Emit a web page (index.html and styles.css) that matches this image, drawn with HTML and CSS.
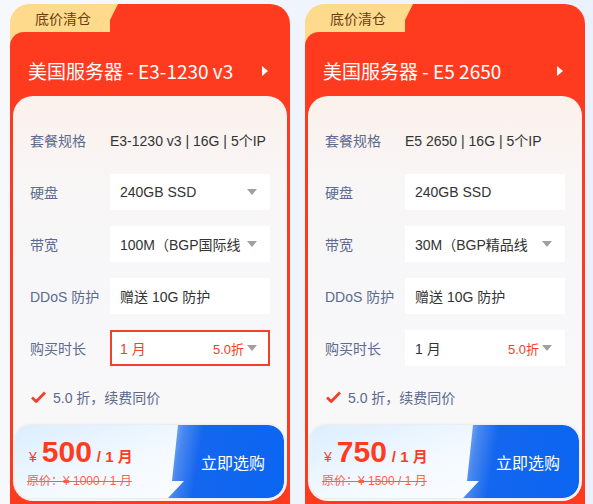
FILE: index.html
```html
<!DOCTYPE html>
<html lang="zh-CN">
<head>
<meta charset="UTF-8" />
<meta name="viewport" content="width=device-width, initial-scale=1" />
<title>美国服务器</title>
<link rel="stylesheet" href="styles.css">
</head>
<body>

  <div class="cards">

    <!-- Card 1 -->
    <div class="card">
      <div class="tag">底价清仓</div>
      <div class="head">
        <span class="title">美国服务器 - E3-1230 v3</span>
        <span class="arrow"></span>
      </div>
      <div class="panel">
        <div class="row">
          <span class="label">套餐规格</span>
          <span class="plain">E3-1230 v3 | 16G | 5个IP</span>
        </div>
        <div class="row">
          <span class="label">硬盘</span>
          <div class="box"><span class="val">240GB SSD</span><i class="caret"></i></div>
        </div>
        <div class="row">
          <span class="label">带宽</span>
          <div class="box"><span class="val">100M（BGP国际线</span><i class="caret"></i></div>
        </div>
        <div class="row">
          <span class="label">DDoS 防护</span>
          <div class="box"><span class="val">赠送 10G 防护</span></div>
        </div>
        <div class="row">
          <span class="label">购买时长</span>
          <div class="box active"><span class="val">1 月</span><span class="off">5.0折</span><i class="caret"></i></div>
        </div>
        <div class="note">
          <svg class="check" width="15" height="12" viewBox="0 0 15 12"><path d="M1 6.5 L5.2 10.5 L14 1.5" fill="none" stroke="#f2402a" stroke-width="2.8" stroke-linejoin="round"/></svg>
          <span>5.0 折，续费同价</span>
        </div>
        <div class="buybar">
          <div class="price">
            <div class="now"><span class="yen">¥</span><span class="num">500</span><span class="unit">/ 1 月</span></div>
            <div class="old">原价：¥ 1000 / 1 月</div>
          </div>
          <div class="buy">立即选购</div>
        </div>
      </div>
    </div>

    <!-- Card 2 -->
    <div class="card">
      <div class="tag">底价清仓</div>
      <div class="head">
        <span class="title">美国服务器 - E5 2650</span>
        <span class="arrow"></span>
      </div>
      <div class="panel">
        <div class="row">
          <span class="label">套餐规格</span>
          <span class="plain">E5 2650 | 16G | 5个IP</span>
        </div>
        <div class="row">
          <span class="label">硬盘</span>
          <div class="box"><span class="val">240GB SSD</span></div>
        </div>
        <div class="row">
          <span class="label">带宽</span>
          <div class="box"><span class="val">30M（BGP精品线</span><i class="caret"></i></div>
        </div>
        <div class="row">
          <span class="label">DDoS 防护</span>
          <div class="box"><span class="val">赠送 10G 防护</span></div>
        </div>
        <div class="row">
          <span class="label">购买时长</span>
          <div class="box"><span class="val">1 月</span><span class="off">5.0折</span><i class="caret"></i></div>
        </div>
        <div class="note">
          <svg class="check" width="15" height="12" viewBox="0 0 15 12"><path d="M1 6.5 L5.2 10.5 L14 1.5" fill="none" stroke="#f2402a" stroke-width="2.8" stroke-linejoin="round"/></svg>
          <span>5.0 折，续费同价</span>
        </div>
        <div class="buybar">
          <div class="price">
            <div class="now"><span class="yen">¥</span><span class="num">750</span><span class="unit">/ 1 月</span></div>
            <div class="old">原价：¥ 1500 / 1 月</div>
          </div>
          <div class="buy">立即选购</div>
        </div>
      </div>
    </div>

  </div>

</body>
</html>
```

FILE: styles.css
```css
* {
  margin: 0; padding: 0; box-sizing: border-box;
}
body {
  height: 504px;
  overflow: hidden;
  background: linear-gradient(to right, #f6f8fc, #eaf1fd);
  font-family: "Liberation Sans", "Noto Sans CJK SC", sans-serif;
  color: #333;
}
.cards {
  display: flex;
  gap: 15px;
  padding: 4px 0 0 10px;
}

/* Card shell */
.card {
  width: 280px;
  height: 560px;
  border-radius: 20px;
  overflow: hidden;
  background:
    linear-gradient(to right, #fedb8c 0 100px, transparent 100px) 0 0 / 100% 50px no-repeat,
    #fe3b1f;
  padding: 0 3px;
}
.tag {
  width: 118px;
  height: 28px;
  margin-left: -3px;
  background: #fedb8c;
  clip-path: polygon(0 0, 108px 0, 96px 24px, 90px 28px, 0 28px);
  color: #6b3b12;
  font-family: "Noto Sans CJK SC", sans-serif;
  font-size: 14px;
  line-height: 28px;
  padding-left: 25px;
}
.head {
  margin: 0 -3px;
  height: 64px;
  background: #fe3b1f;
  border-top-left-radius: 14px;
  display: flex;
  align-items: center;
  justify-content: space-between;
  padding: 14px 22px 0 18px;
}
.title {
  color: #fff;
  font-family: "Noto Sans CJK SC", sans-serif;
  font-size: 19px;
  line-height: 24px;
}
.arrow {
  width: 0; height: 0;
  border-top: 5px solid transparent;
  border-bottom: 5px solid transparent;
  border-left: 6px solid #fff;
}

/* Inner panel */
.panel {
  border-radius: 20px;
  background: linear-gradient(180deg, #fbf1ec 0, #f8f6f6 22%, #f7f7f9 50%, #f9f8f9 80%, #fdf6f3 100%);
  padding: 26px 17px 3px 17px;
  display: flex;
  flex-direction: column;
}
.row {
  display: flex;
  align-items: center;
  height: 36px;
  margin-bottom: 16px;
}
.row:nth-child(5) {
  margin-bottom: 0;
}
.label {
  width: 80px;
  font-size: 14px;
  color: #5c6b8e;
  white-space: nowrap;
}
.plain {
  font-size: 14px;
  color: #333;
  white-space: nowrap;
}
.box {
  width: 160px;
  height: 36px;
  background: #fff;
  display: flex;
  align-items: center;
  padding: 0 13px 0 10px;
  font-size: 14px;
  color: #333;
}
.box .val {
  flex: 1;
  white-space: nowrap;
  overflow: hidden;
}
.box .caret {
  width: 0; height: 0;
  margin-left: 3px;
  border-left: 5px solid transparent;
  border-right: 5px solid transparent;
  border-top: 6px solid #a0a0a0;
}
.box .off {
  color: #f2402a;
  font-size: 13px;
}
.box.active {
  border: 2px solid #f2402a;
  padding: 0 11px 0 8px;
}
.box.active .val {
  color: #f2402a;
}

.note {
  display: flex;
  align-items: center;
  gap: 7px;
  height: 20px;
  margin-top: 21px;
  font-size: 14px;
  color: #5c6b8e;
  padding-left: 1px;
}

/* Price & buy bar */
.buybar {
  display: flex;
  height: 73px;
  margin: 18px -14px 0 -15px;
  border-radius: 16px;
  overflow: hidden;
  background: linear-gradient(160deg, #dbeeff 0, #f3f9ff 45%, #fff 100%);
  box-shadow: 0 0 3px rgba(160, 170, 190, 0.35);
}
.price {
  flex: 1;
  padding: 10px 0 0 14px;
  color: #fe3b1f;
}
.now {
  display: flex;
  align-items: baseline;
  font-weight: bold;
}
.yen {
  font-size: 14px;
  font-weight: normal;
  margin-right: 5px;
}
.num {
  font-size: 30px;
  line-height: 34px;
}
.unit {
  font-size: 15px;
  margin-left: 5px;
}
.old {
  font-size: 12px;
  color: #ff5f4a;
  text-decoration: line-through;
  margin-top: 2px;
  white-space: nowrap;
  margin-left: -2px;
}
.buy {
  width: 118px;
  clip-path: polygon(12px 0, 100% 0, 100% 100%, 2px 100%, 18px 56px, 6px 56px);
  background: linear-gradient(100deg, #a9cbf6 0, #4a88ee 18px, #1466ee 38px, #0a66f2 100%);
  border-radius: 0 16px 16px 0;
  color: #fff;
  font-family: "Noto Sans CJK SC", sans-serif;
  font-size: 16px;
  display: flex;
  align-items: center;
  padding-left: 35px;
}
```
